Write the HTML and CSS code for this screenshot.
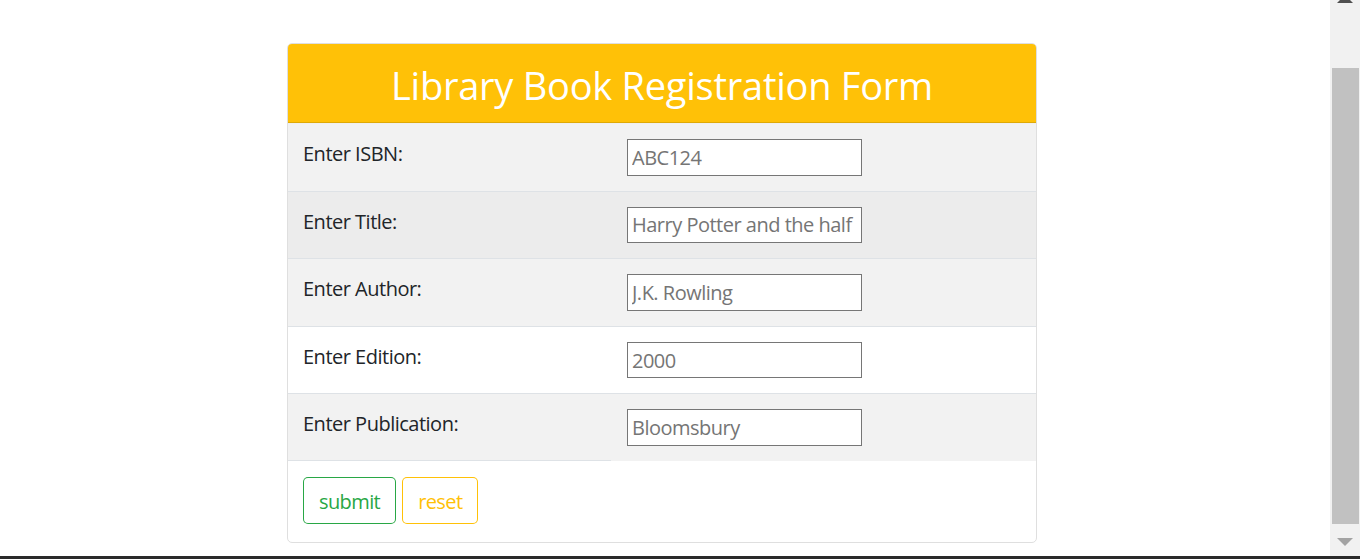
FILE: index.html
```html
<!DOCTYPE html>
<html lang="en">
<head>
<meta charset="utf-8">
<title>Library Book Registration Form</title>
<link rel="stylesheet" href="styles.css">
</head>
<body>
<main class="page">
  <form class="card">
    <div class="card-header">
      <h2 class="title">Library Book Registration Form</h2>
    </div>
    <table class="form-table">
      <tbody>
        <tr class="striped first">
          <td class="label-cell">Enter ISBN:</td>
          <td><input class="field" type="text" placeholder="ABC124"></td>
        </tr>
        <tr class="hovered">
          <td class="label-cell">Enter Title:</td>
          <td><input class="field" type="text" placeholder="Harry Potter and the half blood prince"></td>
        </tr>
        <tr class="striped">
          <td class="label-cell">Enter Author:</td>
          <td><input class="field" type="text" placeholder="J.K. Rowling"></td>
        </tr>
        <tr>
          <td class="label-cell">Enter Edition:</td>
          <td><input class="field" type="text" placeholder="2000"></td>
        </tr>
        <tr class="striped">
          <td class="label-cell">Enter Publication:</td>
          <td><input class="field" type="text" placeholder="Bloomsbury"></td>
        </tr>
        <tr class="actions-row">
          <td class="actions-cell">
            <div class="actions">
              <button type="button" class="btn btn-success">submit</button>
              <button type="reset" class="btn btn-warning">reset</button>
            </div>
          </td>
        </tr>
      </tbody>
    </table>
  </form>
</main>
<div class="scrollbar" aria-hidden="true">
  <span class="arrow-up"></span>
  <span class="thumb"></span>
  <span class="arrow-down"></span>
</div>
<div class="taskbar-edge" aria-hidden="true"></div>
</body>
</html>
```

FILE: styles.css
```css
* { box-sizing: border-box; }

html, body {
  margin: 0;
  padding: 0;
  background: #ffffff;
  overflow: hidden;
}

body {
  font-family: "Open Sans", "Noto Sans", "Liberation Sans", sans-serif;
  font-size: 20px;
  line-height: 1.5;
  color: #212529;
  height: 559px;
}

.page {
  padding: 43px 0 0 287px;
}

.card {
  width: 750px;
  border: 1px solid #dfdfdf;
  border-radius: 5px;
  overflow: hidden;
  background: #fff;
  margin: 0;
}

.card-header {
  background: #ffc107;
  border-bottom: 1px solid #dfa906;
  padding: 17px 25px 13px;
  text-align: center;
}

.title {
  margin: 0;
  font-size: 38px;
  font-weight: 400;
  line-height: 48px;
  color: #ffffff;
  letter-spacing: -0.25px;
}

.form-table {
  width: 100%;
  border-collapse: collapse;
}

.form-table td {
  border-top: 1px solid #dee2e6;
  padding: 15px 15px 15px 16px;
  vertical-align: top;
}

.form-table td.label-cell {
  padding-left: 15px;
}

.form-table tr.first td {
  border-top-color: #efefef;
}

.striped { background: #f2f2f2; }
.hovered { background: #ececec; }

.label-cell {
  width: 323px;
  letter-spacing: -0.5px;
}

.field {
  display: block;
  width: 235px;
  height: 36.6px;
  margin: 0;
  padding: 1px 4px;
  border: 1px solid #767676;
  border-radius: 0;
  background: #fff;
  font-family: inherit;
  font-size: 20px;
  line-height: 30px;
  color: #212529;
  letter-spacing: -0.5px;
}

.field::placeholder {
  color: #757575;
  opacity: 1;
}

.form-table td.actions-cell {
  padding: 16px 15px 18px 15px;
}

.actions {
  display: flex;
  gap: 6px;
}

.btn {
  -webkit-appearance: none;
  appearance: none;
  display: block;
  font-family: inherit;
  font-size: 20px;
  line-height: 30px;
  height: 47px;
  padding: 9px 16px 6px;
  margin: 0;
  background: transparent;
  border: 0;
  border-radius: 5px;
  outline: none;
  letter-spacing: -0.6px;
  cursor: pointer;
}

.btn-success {
  color: #28a745;
  box-shadow: inset 0 0 0 1px #28a745;
}

.btn-warning {
  color: #ffc107;
  box-shadow: inset 0 0 0 1px #ffc107;
}

.scrollbar {
  position: fixed;
  top: 0;
  right: 0;
  width: 30px;
  height: 556px;
  background: #f1f1f1;
}

.thumb {
  position: absolute;
  left: 2px;
  right: 1px;
  top: 68px;
  height: 456px;
  background: #c1c1c1;
}

.arrow-up {
  position: absolute;
  left: 7px;
  top: -5px;
  width: 0;
  height: 0;
  border-left: 8px solid transparent;
  border-right: 8px solid transparent;
  border-bottom: 8px solid #505050;
}

.arrow-down {
  position: absolute;
  left: 7px;
  top: 538px;
  width: 0;
  height: 0;
  border-left: 8px solid transparent;
  border-right: 8px solid transparent;
  border-top: 8px solid #a3a3a3;
}

.taskbar-edge {
  position: fixed;
  left: 0;
  right: 0;
  bottom: 0;
  height: 3px;
  background: #2a2a2a;
}
```
